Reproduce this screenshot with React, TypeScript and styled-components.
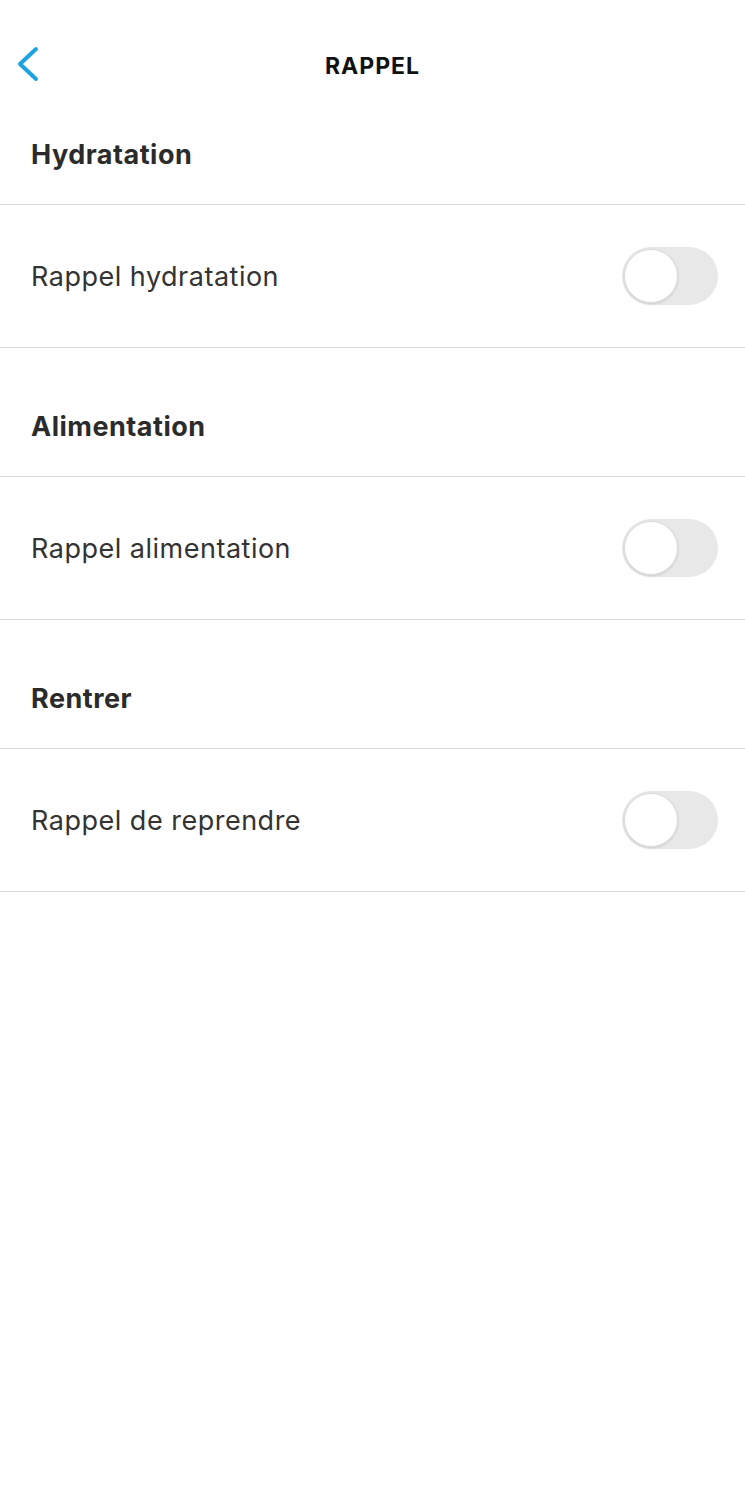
import React from "react";
import styled, { createGlobalStyle } from "styled-components";

const Global = createGlobalStyle`
  html, body { margin: 0; padding: 0; background: #ffffff; }
  body { font-family: "Inter", "Open Sans", sans-serif; color: #2d2d2d; }
`;

const Page = styled.div`
  width: 745px;
  min-height: 1500px;
  background: #fff;
  display: flex;
  flex-direction: column;
`;

const NavBar = styled.header`
  height: 105px;
  display: grid;
  grid-template-columns: 80px 1fr 80px;
  align-items: start;
  padding-top: 44px;
  box-sizing: border-box;
`;

const BackButton = styled.button`
  border: none;
  background: none;
  padding: 0 0 0 14px;
  height: 40px;
  display: flex;
  align-items: center;
  cursor: pointer;
`;

const Title = styled.h1`
  margin: 0;
  text-align: center;
  font-size: 23px;
  font-weight: 700;
  letter-spacing: 1px;
  color: #111;
  line-height: 44px;
`;

const SectionHeader = styled.div<{ $first?: boolean }>`
  height: ${(p) => (p.$first ? 100 : 129)}px;
  display: flex;
  align-items: flex-end;
  padding: 0 31px 33px;
  box-sizing: border-box;
  border-bottom: 1px solid #dcdcdc;
  font-size: 27px;
  font-weight: 700;
  letter-spacing: 0.5px;
  color: #2b2b2b;
`;

const Row = styled.div`
  height: 143px;
  box-sizing: border-box;
  display: flex;
  align-items: center;
  justify-content: space-between;
  padding: 0 27px 0 31px;
  border-bottom: 1px solid #dcdcdc;
`;

const Label = styled.span`
  font-size: 27px;
  font-weight: 400;
  letter-spacing: 0.5px;
  color: #333;
`;

const Track = styled.div`
  width: 96px;
  height: 58px;
  border-radius: 29px;
  background: #e8e8e8;
  position: relative;
`;

const Knob = styled.div`
  position: absolute;
  top: 2px;
  left: 2px;
  width: 54px;
  height: 54px;
  border-radius: 50%;
  background: #fff;
  box-sizing: border-box;
  border: 1px solid #dedede;
  box-shadow: 0 1px 3px rgba(0, 0, 0, 0.12);
`;

const Toggle = () => (
  <Track>
    <Knob />
  </Track>
);

const sections = [
  { title: "Hydratation", label: "Rappel hydratation" },
  { title: "Alimentation", label: "Rappel alimentation" },
  { title: "Rentrer", label: "Rappel de reprendre" },
];

export default function App() {
  return (
    <Page>
      <Global />
      <NavBar>
        <BackButton aria-label="Retour">
          <svg width="26" height="36" viewBox="0 0 26 36">
            <path d="M22 3 L6 18 L22 33" fill="none" stroke="#1ea3e1" strokeWidth="4" strokeLinecap="round" strokeLinejoin="round" />
          </svg>
        </BackButton>
        <Title>RAPPEL</Title>
        <div />
      </NavBar>
      {sections.map((s, i) => (
        <React.Fragment key={s.title}>
          <SectionHeader $first={i === 0}>{s.title}</SectionHeader>
          <Row>
            <Label>{s.label}</Label>
            <Toggle />
          </Row>
        </React.Fragment>
      ))}
    </Page>
  );
}
